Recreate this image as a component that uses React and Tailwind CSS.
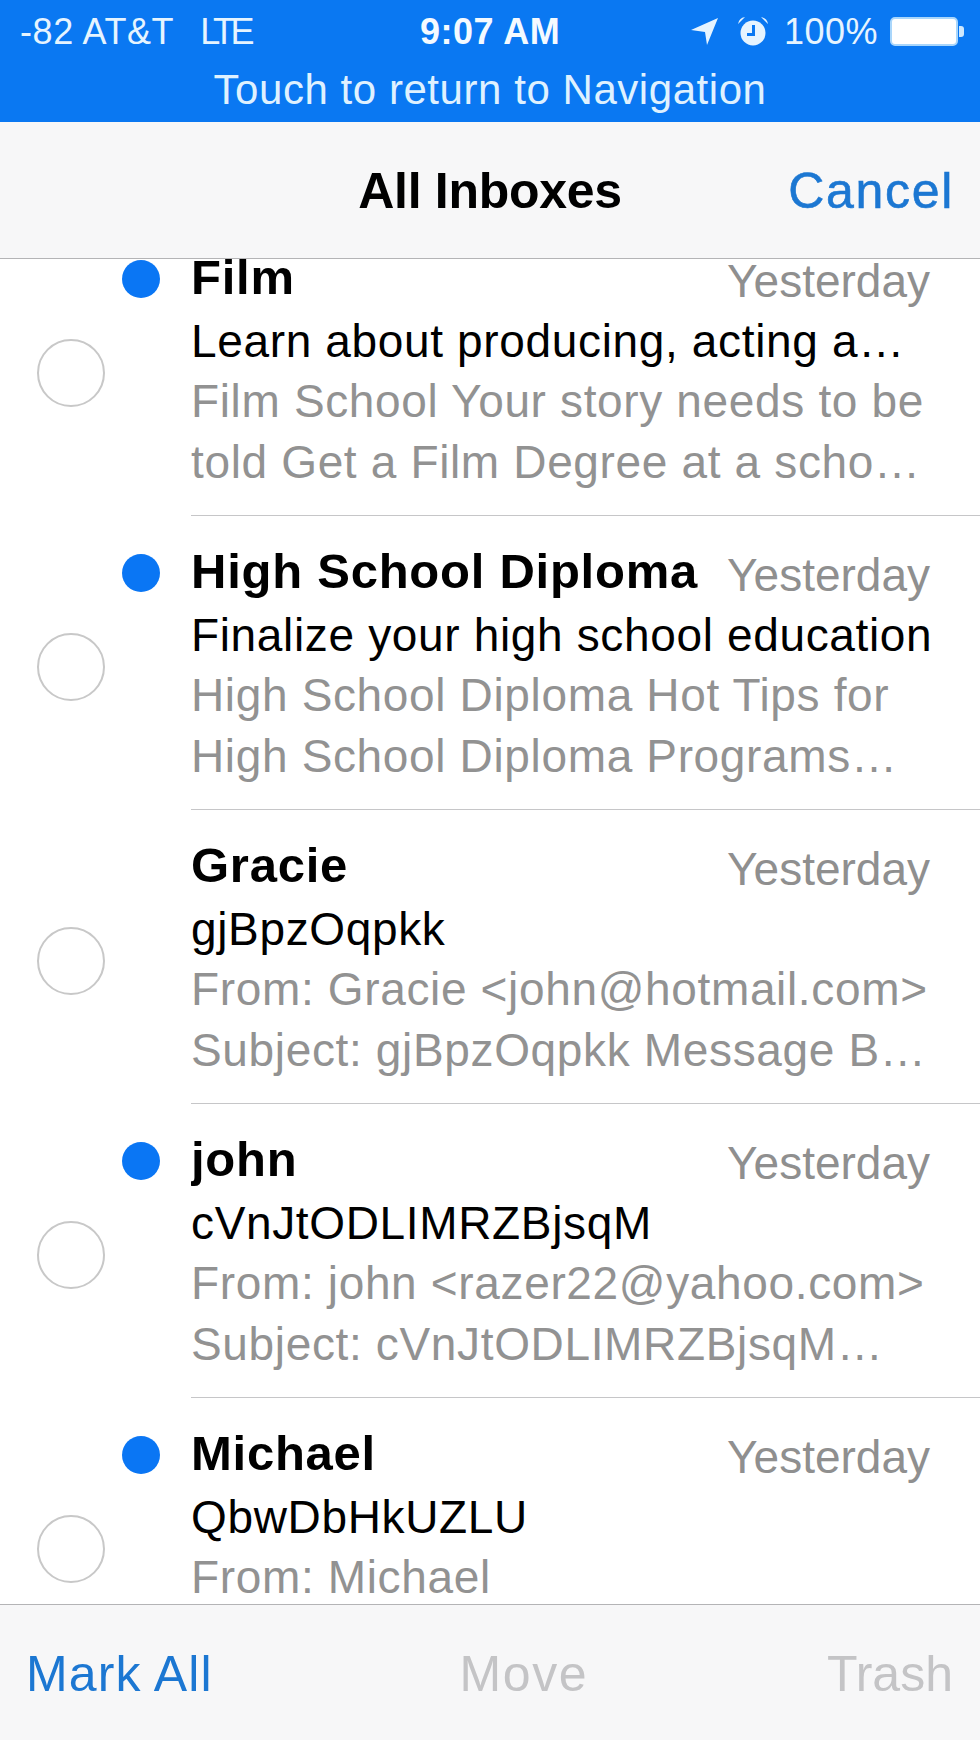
import React from 'react';

const messages = [
  {
    name: 'Film',
    unread: true,
    subject: 'Learn about producing, acting a…',
    preview: ['Film School Your story needs to be', 'told Get a Film Degree at a scho…'],
  },
  {
    name: 'High School Diploma',
    unread: true,
    subject: 'Finalize your high school education',
    preview: ['High School Diploma Hot Tips for', 'High School Diploma Programs…'],
  },
  {
    name: 'Gracie',
    unread: false,
    subject: 'gjBpzOqpkk',
    preview: ['From: Gracie <john@hotmail.com>', 'Subject: gjBpzOqpkk Message B…'],
  },
  {
    name: 'john',
    unread: true,
    subject: 'cVnJtODLIMRZBjsqM',
    preview: ['From: john <razer22@yahoo.com>', 'Subject: cVnJtODLIMRZBjsqM…'],
  },
  {
    name: 'Michael',
    unread: true,
    subject: 'QbwDbHkUZLU',
    preview: ['From: Michael', ''],
  },
];

const LocationArrow = () => (
  <svg width="27" height="27" viewBox="0 0 27 27" fill="#e6f4ff">
    <path d="M0 12 L27 0 L16 27 L14 14 Z" />
  </svg>
);

const Alarm = () => (
  <svg width="30" height="29" viewBox="0 0 30 29">
    <path d="M0 7 Q1 1 7 0 Z M30 7 Q29 1 23 0 Z" fill="#e6f4ff" />
    <circle cx="15" cy="16" r="12.5" fill="#e6f4ff" />
    <path d="M15.5 8 V17.5 H9" fill="none" stroke="#0a78f2" strokeWidth="3" />
  </svg>
);

const Battery = () => (
  <div className="flex items-center">
    <div className="w-[68px] h-[29px] rounded-[5px] border-2 border-[#a9d6fb] bg-white" />
    <div className="w-[5px] h-[11px] rounded-r-[3px] bg-[#cfe8fd] ml-[1px]" />
  </div>
);

const StatusBar = () => (
  <div className="h-[122px] bg-[#0a78f2] text-[#e6f4ff] shrink-0">
    <div className="relative flex items-center h-[63px] pl-[20px] pr-[16px] text-[36px]">
      <span className="tracking-[0.6px]">-82 AT&amp;T</span>
      <span className="ml-[26px] tracking-[-4.5px]">LTE</span>
      <span className="absolute left-[420px] font-bold text-[#f4faff] tracking-[0.5px]">9:07 AM</span>
      <div className="ml-auto flex items-center">
        <LocationArrow />
        <div className="ml-[20px]">
          <Alarm />
        </div>
        <span className="ml-[16px] mr-[12px] tracking-[0.5px]">100%</span>
        <Battery />
      </div>
    </div>
    <div className="text-center text-[42px] leading-[54px] tracking-[0.55px] text-[#dff1ff]">
      Touch to return to Navigation
    </div>
  </div>
);

const NavBar = () => (
  <div className="relative h-[137px] bg-[#f7f7f8] border-b border-[#b4b4b6] flex items-center justify-center shrink-0">
    <span className="font-bold text-[50px] leading-[57px] mt-[2px] text-black tracking-[-0.3px]">All Inboxes</span>
    <span className="absolute right-[26px] top-[41px] text-[50px] leading-[57px] tracking-[1.7px] text-[#1c77d2] [-webkit-text-stroke:0.6px_#1c77d2]">
      Cancel
    </span>
  </div>
);

const Row = ({ message }) => (
  <div className="flex h-[294px] shrink-0">
    <div className="w-[191px] shrink-0 relative">
      {message.unread && (
        <div className="absolute left-[122px] top-[38px] w-[38px] h-[38px] rounded-full bg-[#0a76f4]" />
      )}
      <div className="absolute left-[37px] top-[117px] w-[68px] h-[68px] rounded-full border-2 border-[#c8c8c8]" />
    </div>
    <div className="flex-1 min-w-0 border-b border-[#c6c6c8] pt-[25px] overflow-hidden">
      <div className="flex items-start justify-between h-[61px] pr-[50px]">
        <span className="font-bold text-[49px] leading-[61px] tracking-[0.75px] text-black whitespace-nowrap">
          {message.name}
        </span>
        <span className="text-[46px] leading-[61px] mt-[4px] text-[#8f8f8f]">Yesterday</span>
      </div>
      <div className="text-[46px] leading-[61px] mt-[3px] tracking-[0.65px] text-black whitespace-nowrap">
        {message.subject}
      </div>
      <div className="-mt-[1px]">
        {message.preview.map((line, i) => (
          <div key={i} className="text-[46px] leading-[61px] tracking-[0.65px] text-[#929292] whitespace-nowrap">
            {line}
          </div>
        ))}
      </div>
    </div>
  </div>
);

const Toolbar = () => (
  <div className="h-[136px] bg-[#f7f7f8] border-t border-[#b4b4b6] flex items-start justify-between pl-[26px] pr-[27px] pt-[41px] text-[50px] leading-[57px] shrink-0">
    <span className="text-[#1c77d2] tracking-[1.1px]">Mark All</span>
    <span className="text-[#c4c4c6] ml-[8px] tracking-[1.6px]">Move</span>
    <span className="text-[#c4c4c6]">Trash</span>
  </div>
);

export default function App() {
  return (
    <div
      className="w-[980px] h-[1740px] flex flex-col bg-white overflow-hidden"
      style={{ fontFamily: '"Liberation Sans", Arial, sans-serif' }}
    >
      <StatusBar />
      <NavBar />
      <div className="flex-1 min-h-0 overflow-hidden">
        <div className="-mt-[37px]">
          {messages.map((m) => (
            <Row key={m.name} message={m} />
          ))}
        </div>
      </div>
      <Toolbar />
    </div>
  );
}
